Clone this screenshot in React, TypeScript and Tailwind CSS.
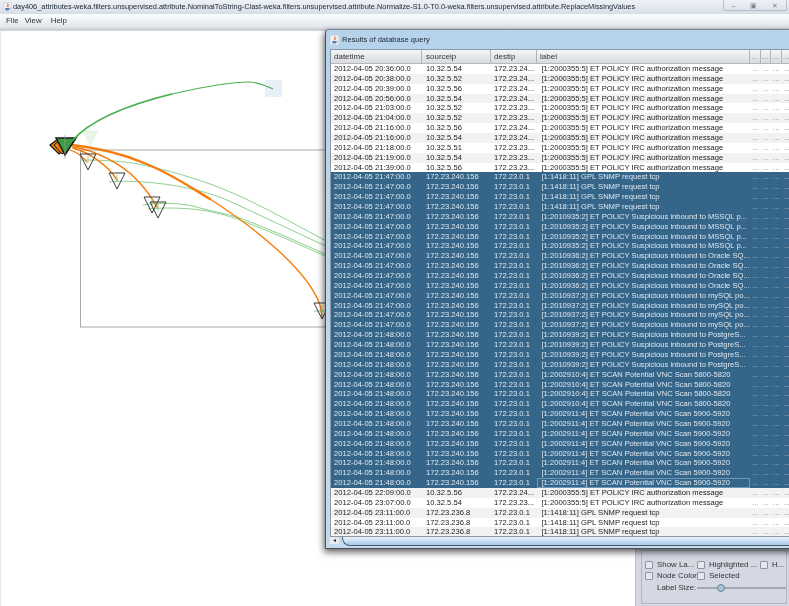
import React from "react";

type Row = { t: string; s: string; d: string; l: string; sel?: boolean; focus?: boolean };

const IRC = "[1:2000355:5] ET POLICY IRC authorization message";
const SNMP = "[1:1418:11] GPL SNMP request tcp";
const r = (t: string, s: string, d: string): Row => ({ t: `2012-04-05 ${t}:00.0`, s, d: `172.23.${d}...`, l: IRC });
const sel = (t: string, l: string, n: number): Row[] =>
  Array.from({ length: n }, () => ({ t: `2012-04-05 ${t}:00.0`, s: "172.23.240.156", d: "172.23.0.1", l, sel: true }));

const last = sel("21:48", "[1:2002911:4] ET SCAN Potential VNC Scan 5900-5920", 8);
last[7].focus = true;

const rows: Row[] = [
  r("20:36", "10.32.5.54", "24"),
  r("20:38", "10.32.5.52", "24"),
  r("20:39", "10.32.5.56", "24"),
  r("20:56", "10.32.5.54", "24"),
  r("21:03", "10.32.5.52", "23"),
  r("21:04", "10.32.5.52", "23"),
  r("21:16", "10.32.5.56", "24"),
  r("21:16", "10.32.5.54", "24"),
  r("21:18", "10.32.5.51", "23"),
  r("21:19", "10.32.5.54", "23"),
  r("21:39", "10.32.5.56", "23"),
  ...sel("21:47", SNMP, 4),
  ...sel("21:47", "[1:2010935:2] ET POLICY Suspicious inbound to MSSQL p...", 4),
  ...sel("21:47", "[1:2010936:2] ET POLICY Suspicious inbound to Oracle SQ...", 4),
  ...sel("21:47", "[1:2010937:2] ET POLICY Suspicious inbound to mySQL po...", 4),
  ...sel("21:48", "[1:2010939:2] ET POLICY Suspicious inbound to PostgreS...", 4),
  ...sel("21:48", "[1:2002910:4] ET SCAN Potential VNC Scan 5800-5820", 4),
  ...last,
  r("22:09", "10.32.5.56", "24"),
  r("23:07", "10.32.5.54", "23"),
  ...Array.from({ length: 3 }, () => ({ t: "2012-04-05 23:11:00.0", s: "172.23.236.8", d: "172.23.0.1", l: SNMP })),
];

function JavaIcon() {
  return (
    <svg width="9" height="10" viewBox="0 0 10 11" className="shrink-0">
      <rect x="0" y="0" width="10" height="11" fill="#eef1f5" stroke="#a9b2bc" strokeWidth="0.6" />
      <path d="M5 1.5C6.5 3 3.8 4 5 5.6M6.3 2.8C7 4 5.4 4.6 6 5.6" stroke="#d9622b" strokeWidth="0.9" fill="none" />
      <path d="M2.5 6.5H7V8.4C7 9.2 6.4 9.5 5.6 9.5H3.9C3.1 9.5 2.5 9.2 2.5 8.4Z" fill="#5b7fb0" />
      <path d="M7 7H8.2V8H7" stroke="#5b7fb0" strokeWidth="0.5" fill="none" />
    </svg>
  );
}

function Check() {
  return <span className="block w-[8px] h-[8px] shrink-0 rounded-[1px] border border-[#8f95a3] bg-[#e6e8ee]" />;
}

function Tri({ x, y }: { x: number; y: number }) {
  return (
    <g>
      <path d={`M${x - 8} ${y}H${x + 8}L${x} ${y + 16}Z`} fill="none" stroke="#3c3c3c" strokeWidth="1" />
      <path d={`M${x} ${y + 2}V${y + 9}`} stroke="#8fcf8f" strokeWidth="1" />
    </g>
  );
}

function GraphDrawing() {
  return (
    <svg className="absolute left-0 top-0" width="330" height="330" viewBox="0 0 330 330">
      <rect x="80.5" y="150" width="260" height="177" fill="none" stroke="#a8a8a8" strokeWidth="1" />
      <rect x="265" y="80" width="17" height="17" fill="#e9eff6" />
      <path d="M83 131H98L90 146Z" fill="#eaf5ea" stroke="#e0efe0" strokeWidth="0.6" />
      <path d="M78 138C105 115 135 102 172 93" fill="none" stroke="#edf6ed" strokeWidth="1" />

      <g fill="none" stroke="#8fd08f" strokeWidth="1">
        <path d="M80 160C100 160 125 161 143 165C180 173 215 184 248 200C275 213 300 227 330 243" />
        <path d="M109 182C125 180 160 182 187 188C205 192 215 195 227 200C260 215 295 232 330 248" />
        <path d="M143 205C160 202 185 203 200 208C215 212 228 214 240 218C270 229 300 243 330 256" />
        <path d="M148 209C165 207 195 208 212 212C225 215 232 217 240 220C270 231 300 245 330 258" />
        <path d="M314 311H326" />
      </g>

      <g fill="none" stroke="#f57c0a" strokeLinecap="round">
        <path d="M72 145C100 148 125 155 144 163C170 173 190 187 210 199" strokeWidth="2.4" />
        <path d="M210 199C255 228 308 270 320 305C321 310 322 314 322 318" strokeWidth="1.4" />
        <path d="M73 147C95 150 122 164 137 180C146 189 152 198 157 207" strokeWidth="1.5" />
        <path d="M73 148C88 152 108 165 117 180" strokeWidth="1.5" />
        <path d="M70 150C76 152 83 157 87 162" strokeWidth="1.2" />
      </g>

      <Tri x={88} y={154} />
      <Tri x={117} y={173} />
      <Tri x={152} y={197} />
      <Tri x={158} y={202} />
      <Tri x={322} y={303} />

      <path d="M50 145L58 139L67 147L59 154Z" fill="#f0830f" stroke="#111" strokeWidth="1.2" />
      <path d="M54 145L61 139L70 148L62 154Z" fill="#f0830f" stroke="#111" strokeWidth="1" />
      <path d="M56 138H76L65 155Z" fill="#3f9a41" stroke="#1c1c1c" strokeWidth="1.6" />
      <path d="M65 135V159" stroke="#9a9a9a" strokeWidth="0.8" opacity="0.8" />

      <path d="M72 141C92 118 135 103 172 94" fill="none" stroke="#45ad4a" strokeWidth="1.8" />
      <path d="M172 94C205 86 235 82 248 82C258 82 266 86 273 89" fill="none" stroke="#4cb050" strokeWidth="1.1" />
    </svg>
  );
}

export default function App() {
  return (
    <div className="relative w-[789px] h-[606px] overflow-hidden bg-white blur-[0.3px] font-['Liberation_Sans',Arial,sans-serif] text-[#222]">
      {/* title bar */}
      <div className="h-[14px] flex items-center pl-[3px] gap-[1px] bg-gradient-to-b from-[#eef2f6] to-[#d6dee6]">
        <JavaIcon />
        <span className="flex-1 min-w-0 text-[7.38px] leading-none whitespace-nowrap text-[#1c2530]">
          day406_attributes-weka.filters.unsupervised.attribute.NominalToString-Clast-weka.filters.unsupervised.attribute.Normalize-S1.0-T0.0-weka.filters.unsupervised.attribute.ReplaceMissingValues
        </span>
        <div className="w-[64px] h-[11px] mr-[2px] -mt-[3px] shrink-0 flex items-center justify-around rounded-b-[2px] border border-t-0 border-[#b7bec6] text-[#7e8791] text-[7px] leading-none">
          <span>–</span>
          <span>▣</span>
          <span>✕</span>
        </div>
      </div>
      {/* menu bar */}
      <div className="h-[14px] flex items-center gap-[6px] pl-[6px] text-[7.9px] bg-gradient-to-b from-[#fbfcfd] to-[#e1e5ea] text-[#333]">
        <span>File</span>
        <span className="mr-[3px]">View</span>
        <span>Help</span>
      </div>
      <div className="h-[3px] bg-[#cfd4da]" />

      {/* body */}
      <div className="flex h-[575px]">
        <div className="w-[635px] shrink-0 border-l border-[#e6e6e6] bg-white" />
        <div className="w-[154px] shrink-0 flex flex-col justify-end bg-[#d5d8e3] border-l border-[#bcbfca] pl-[5px] pr-[2px] pb-[2px]">
          <div className="h-[54px] border border-[#b4b7c2] pl-[3px] pt-[9px] flex flex-col gap-[1px] text-[7.9px] leading-[10px] text-[#333]">
            <div className="flex items-center">
              <Check />
              <span className="ml-[4px] w-[40px] whitespace-nowrap">Show La...</span>
              <Check />
              <span className="ml-[4px] w-[51px] whitespace-nowrap">Highlighted ...</span>
              <Check />
              <span className="ml-[4px]">H...</span>
            </div>
            <div className="flex items-center">
              <Check />
              <span className="ml-[4px] w-[40px] whitespace-nowrap">Node Color</span>
              <Check />
              <span className="ml-[4px]">Selected</span>
            </div>
            <div className="flex items-center pl-[12px] mt-[1px]">
              <span className="w-[40px] whitespace-nowrap">Label Size:</span>
              <div className="relative flex-1 h-[2px] bg-[#a3a7b3]">
                <span className="absolute left-[20px] -top-[3px] w-[8px] h-[8px] rounded-full border border-[#6d8193] bg-[#a8c2d8]" />
              </div>
            </div>
          </div>
        </div>
      </div>

      <GraphDrawing />

      {/* floating result window */}
      <div className="absolute left-[325px] top-[29px] w-[480px] h-[520px] flex flex-col rounded-tl-[4px] border border-[#46505a] border-t-[#7d8b99] bg-gradient-to-b from-[#b6d3ec] to-[#c4dbef] shadow-[-1px_3px_7px_rgba(0,0,0,0.65)]">
        <div className="h-[19px] shrink-0 flex items-center pl-[4px] gap-[3px] text-[7.55px] text-[#1c2530]">
          <JavaIcon />
          <span>Results of database query</span>
        </div>
        <div className="ml-[4px] border border-[#8b98a5] bg-white flex-1 flex flex-col min-h-0 overflow-hidden">
          <div className="h-[14px] shrink-0 flex items-center text-[8px] text-[#333] bg-gradient-to-b from-[#f4f5f6] to-[#d9dbde] border-b border-[#b5b8bd]">
            <span className="w-[91px] pl-[3px] border-r border-[#b0b3b8] leading-[13px]">datetime</span>
            <span className="w-[69px] pl-[4px] border-r border-[#b0b3b8] leading-[13px]">sourceip</span>
            <span className="w-[46px] pl-[3px] border-r border-[#b0b3b8] leading-[13px]">destip</span>
            <span className="w-[213px] pl-[3px] border-r border-[#b0b3b8] leading-[13px]">label</span>
            {[0, 1, 2, 3].map((i) => (
              <span key={i} className="w-[10.5px] text-center border-r border-[#b0b3b8] text-[#888] leading-[13px]">...</span>
            ))}
          </div>
          <div className="flex-1 min-h-0 overflow-hidden">
            {rows.map((row, i) => (
              <div
                key={i}
                className={`h-[9.86px] flex items-center text-[7.6px] leading-[9.86px] whitespace-nowrap ${
                  row.sel ? "bg-[#36658a] text-[#dfe8ef]" : i % 2 === 1 ? "bg-[#f2f2f2] text-[#222]" : "bg-white text-[#222]"
                }`}
              >
                <span className="w-[91px] pl-[3px]">{row.t}</span>
                <span className="w-[69px] pl-[4px]">{row.s}</span>
                <span className="w-[46px] pl-[3px]">{row.d}</span>
                <span className={`w-[213px] pl-[4.5px] h-full ${row.focus ? "outline outline-1 -outline-offset-1 outline-[#6d9abb]" : ""}`}>{row.l}</span>
                {[0, 1, 2, 3].map((j) => (
                  <span key={j} className={`w-[10.5px] text-center ${row.sel ? "text-[#a9bdcd]" : "text-[#8a8a9a]"}`}>...</span>
                ))}
              </div>
            ))}
          </div>
        </div>
        <div className="ml-[4px] h-[11px] shrink-0 flex items-start">
          <div className="w-[9px] h-[7px] flex items-center justify-center bg-[#e8ebee] text-[5px] leading-none text-[#333]">◄</div>
          <div className="flex-1 h-[9px] ml-[3px] rounded-bl-[8px] border-l border-b border-[#4e5c69] bg-gradient-to-b from-[#e9f3fb] to-[#a9cbe8]" />
        </div>
      </div>
    </div>
  );
}
